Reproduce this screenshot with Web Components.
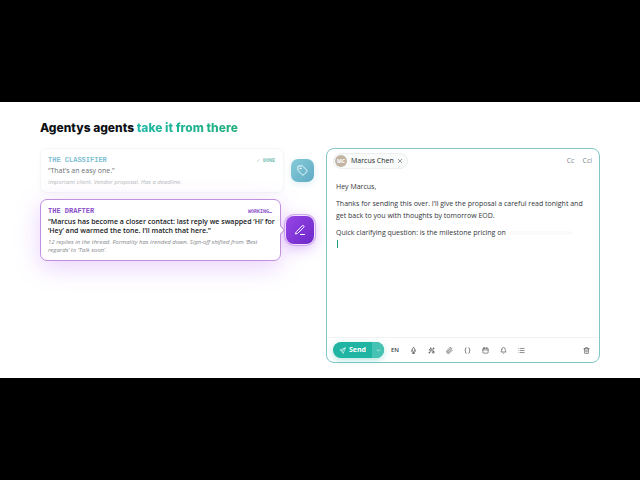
<!DOCTYPE html>
<html lang="en">
<head>
<meta charset="utf-8">
<meta name="viewport" content="width=device-width, initial-scale=1">
<title>Agentys agents</title>
<style>
  body {
    margin: 0;
    min-height: 100vh;
    display: flex;
    flex-direction: column;
    justify-content: center;
    background: #000;
    font-family: "Open Sans", "Noto Sans", sans-serif;
    font-size: 7px;
    line-height: 12px;
    color: #33363a;
  }
</style>
</head>
<body>
<agent-showcase>
  <span slot="title">Agentys agents</span>
  <span slot="accent">take it from there</span>

  <agent-step slot="agents" tone="classifier">
    <span slot="name">THE CLASSIFIER</span>
    <span slot="status">✓ DONE</span>
    <span slot="quote">“That’s an easy one.”</span>
    <span slot="note">Important client. Vendor proposal. Has a deadline.</span>
    <ui-icon slot="icon" name="tag"></ui-icon>
  </agent-step>

  <agent-step slot="agents" tone="drafter" active>
    <span slot="name">THE DRAFTER</span>
    <span slot="status">WORKING…</span>
    <span slot="quote">“Marcus has become a closer contact: last reply we swapped ‘Hi’ for ‘Hey’ and warmed the tone. I’ll match that here.”</span>
    <span slot="note">12 replies in the thread. Formality has trended down. Sign-off shifted from ‘Best regards’ to ‘Talk soon’.</span>
    <ui-icon slot="icon" name="pen"></ui-icon>
  </agent-step>

  <mail-editor slot="editor">
    <recipient-chip slot="to" initials="MC">Marcus Chen</recipient-chip>
    <mail-body></mail-body>
    <editor-toolbar slot="toolbar"></editor-toolbar>
  </mail-editor>
</agent-showcase>

<script>
const ICONS = {
  tag: '<path d="M12.6 2.6A2 2 0 0 0 11.2 2H4a2 2 0 0 0-2 2v7.2a2 2 0 0 0 .6 1.4l8.7 8.7a2.4 2.4 0 0 0 3.4 0l6.6-6.6a2.4 2.4 0 0 0 0-3.4z"/><circle cx="7.5" cy="7.5" r="1"/>',
  pen: '<path d="M13 21h8"/><path d="M16.4 3.6a2.1 2.1 0 0 1 3 3L7.4 18.6a2 2 0 0 1-.9.5L3 20l.9-3.5a2 2 0 0 1 .5-.9z"/>',
  close: '<path d="M5 5l14 14M19 5L5 19"/>',
  send: '<path d="M21 3L3 10.5l7.5 3L13.5 21z"/><path d="M21 3L10.5 13.5"/>',
  chevron: '<path d="M6 9l6 6 6-6"/>',
  mic: '<rect x="8.5" y="2" width="7" height="13" rx="3.5"/><path d="M5 10v2a7 7 0 0 0 14 0v-2M12 19v3M8 22h8"/>',
  sparkles: '<path d="M9.5 3l1.6 4.9L16 9.5l-4.9 1.6L9.5 16l-1.6-4.9L3 9.5l4.9-1.6z"/><path d="M18 13l1.2 3.3 3.3 1.2-3.3 1.2L18 22l-1.2-3.3-3.3-1.2 3.3-1.2z"/><path d="M19 3v4M17 5h4M5 17v4M3 19h4"/>',
  clip: '<path d="M21.4 11l-9.2 9.2a6 6 0 0 1-8.5-8.5l8.6-8.5a4 4 0 1 1 5.7 5.6l-8.6 8.6a2 2 0 0 1-2.8-2.9l8.5-8.4"/>',
  braces: '<path d="M8 3H7a2 2 0 0 0-2 2v5a2 2 0 0 1-2 2 2 2 0 0 1 2 2v5a2 2 0 0 0 2 2h1M16 3h1a2 2 0 0 1 2 2v5a2 2 0 0 0 2 2 2 2 0 0 0-2 2v5a2 2 0 0 1-2 2h-1"/>',
  calendar: '<rect x="3" y="4" width="18" height="17" rx="2"/><path d="M8 2v4M16 2v4M3 10h18"/>',
  bell: '<path d="M6 8a6 6 0 0 1 12 0c0 7 3 9 3 9H3s3-2 3-9"/><path d="M10.3 21a2 2 0 0 0 3.4 0"/>',
  list: '<path d="M8 5h13M8 12h13M8 19h13M3 5h.1M3 12h.1M3 19h.1"/>',
  trash: '<path d="M3 6h18M19 6v14a2 2 0 0 1-2 2H7a2 2 0 0 1-2-2V6M8 6V4a2 2 0 0 1 2-2h4a2 2 0 0 1 2 2v2M10 11v6M14 11v6"/>'
};

class UiIcon extends HTMLElement {
  connectedCallback() {
    this.attachShadow({ mode: 'open' });
    this.shadowRoot.innerHTML = `
      <style>
        :host {
          display: block;
          flex: none;
          width: var(--icon-size, 7px);
          height: var(--icon-size, 7px);
        }
        svg {
          display: block;
          width: 100%;
          height: 100%;
          fill: none;
          stroke: currentColor;
          stroke-width: var(--icon-stroke, 2);
          stroke-linecap: round;
          stroke-linejoin: round;
        }
      </style>
      <svg viewBox="0 0 24 24" aria-hidden="true">${ICONS[this.getAttribute('name')]}</svg>
    `;
  }
}

class AgentShowcase extends HTMLElement {
  connectedCallback() {
    this.attachShadow({ mode: 'open' });
    this.shadowRoot.innerHTML = `
      <style>
        :host {
          display: block;
          background: #fff;
          padding: 18px 40px 15px;
        }
        h2 {
          margin: 0 0 12px;
          font-family: Inter, sans-serif;
          font-size: 12px;
          line-height: 16px;
          font-weight: 800;
          color: #0d1114;
        }
        .accent {
          color: transparent;
          background: linear-gradient(90deg, #1db8a6, #22ad7c);
          background-clip: text;
          -webkit-background-clip: text;
        }
        .columns {
          display: grid;
          grid-template-columns: 1fr 1fr;
          gap: 12px;
        }
        .agents {
          display: flex;
          flex-direction: column;
          gap: 6px;
        }
      </style>
      <h2><slot name="title"></slot> <span class="accent"><slot name="accent"></slot></span></h2>
      <div class="columns">
        <div class="agents"><slot name="agents"></slot></div>
        <slot name="editor"></slot>
      </div>
    `;
  }
}

class AgentStep extends HTMLElement {
  connectedCallback() {
    this.attachShadow({ mode: 'open' });
    this.shadowRoot.innerHTML = `
      <style>
        :host {
          display: flex;
          align-items: center;
          gap: 7px;
          --tone: #7fc0d4;
          --status: #72c0b0;
          --quote: #6c7074;
          --note: #b5b8bb;
          --icon-size: 11px;
        }
        :host([active]) {
          gap: 5px;
          --tone: #8a4fc9;
          --status: #8a4fc9;
          --quote: #17191c;
          --note: #85888c;
          --icon-size: 12px;
        }
        .card {
          position: relative;
          flex: 1;
          min-width: 0;
          box-sizing: border-box;
          padding: 7px 4px 6px 7px;
          border: 1px solid #f5f6f7;
          border-radius: 7px;
          background: #fff;
          box-shadow: 0 1px 4px rgba(20, 30, 40, 0.03);
        }
        :host([active]) .card {
          border-color: #c08fdf;
          box-shadow: 0 6px 24px rgba(176, 90, 245, 0.28);
        }
        /* pointer towards the badge */
        :host([active]) .card::after {
          content: "";
          position: absolute;
          top: 50%;
          right: -4px;
          width: 6px;
          height: 6px;
          margin-top: -3px;
          border: solid #c08fdf;
          border-width: 1px 1px 0 0;
          background: #fff;
          transform: rotate(45deg);
          box-sizing: border-box;
        }
        .head {
          display: flex;
          justify-content: space-between;
          margin: 0 4px 2px 0;
          font-family: "Liberation Mono", monospace;
          font-size: 7px;
          line-height: 8px;
          font-weight: 700;
          color: var(--tone);
        }
        .status {
          font-family: "DejaVu Sans Mono", monospace;
          font-size: 5px;
          color: var(--status);
        }
        p {
          margin: 0;
        }
        .quote {
          line-height: 9px;
          font-weight: 500;
          color: var(--quote);
        }
        :host([active]) .quote {
          font-weight: 600;
        }
        .note {
          margin-top: 3px;
          font-size: 6px;
          line-height: 8px;
          font-style: italic;
          color: var(--note);
        }
        .badge {
          display: grid;
          place-items: center;
          width: 23px;
          height: 23px;
          border-radius: 7px;
          color: #fff;
          background: linear-gradient(135deg, #86cbd8, #5faac4);
          box-shadow: 0 2px 6px rgba(95, 170, 196, 0.2);
        }
        :host([active]) .badge {
          width: 28px;
          height: 28px;
          border-radius: 8px;
          background: linear-gradient(135deg, #9645e6, #6d28c9);
          box-shadow: 0 0 0 1px #f3e4fd, 0 0 0 2px #d0a8ef, 0 4px 14px rgba(160, 70, 240, 0.4);
        }
      </style>
      <div class="card">
        <div class="head">
          <slot name="name"></slot>
          <span class="status"><slot name="status"></slot></span>
        </div>
        <p class="quote"><slot name="quote"></slot></p>
        <p class="note"><slot name="note"></slot></p>
      </div>
      <div class="badge"><slot name="icon"></slot></div>
    `;
  }
}

class RecipientChip extends HTMLElement {
  connectedCallback() {
    this.attachShadow({ mode: 'open' });
    this.shadowRoot.innerHTML = `
      <style>
        :host {
          display: flex;
          align-items: center;
          padding: 1px;
          border: 1px solid #eceeef;
          border-radius: 8px;
          background: #f9fafa;
          font-weight: 500;
          color: #24272a;
        }
        .avatar {
          width: 12px;
          height: 12px;
          margin-right: 4px;
          border-radius: 50%;
          background: #c3b5a3;
          color: #fff;
          font-size: 5px;
          font-weight: 700;
          text-align: center;
        }
        button {
          display: grid;
          place-items: center;
          width: 12px;
          height: 12px;
          padding: 0;
          border: 0;
          background: none;
          color: #74787c;
          --icon-size: 6px;
          --icon-stroke: 3;
        }
      </style>
      <span class="avatar">${this.getAttribute('initials')}</span>
      <slot></slot>
      <button type="button" aria-label="Remove"><ui-icon name="close"></ui-icon></button>
    `;
  }
}

class MailBody extends HTMLElement {
  connectedCallback() {
    this.attachShadow({ mode: 'open' });
    this.shadowRoot.innerHTML = `
      <style>
        :host {
          display: block;
          flex: 1;
          padding: 12px 9px 10px;
        }
        .text {
          min-height: 146px;
          outline: none;
        }
        p {
          margin: 0 0 5px;
        }
        .pending {
          display: inline-block;
          width: 62px;
          height: 4px;
          margin-left: 2px;
          border-radius: 2px;
          background: #fafafa;
        }
        .caret {
          display: block;
          width: 1px;
          height: 8px;
          margin: 1px;
          background: #1b9a80;
        }
      </style>
      <div class="text" role="textbox" aria-multiline="true" aria-label="Message" contenteditable="true" spellcheck="false">
        <p>Hey Marcus,</p>
        <p>Thanks for sending this over. I’ll give the proposal a careful read tonight and get back to you with thoughts by tomorrow EOD.</p>
        <p>Quick clarifying question: is the milestone pricing on <span class="pending"></span><span class="caret"></span></p>
      </div>
    `;
  }
}

class EditorToolbar extends HTMLElement {
  connectedCallback() {
    const tools = [
      ['mic', 'Dictate'],
      ['sparkles', 'Rewrite'],
      ['clip', 'Attach file'],
      ['braces', 'Insert variable'],
      ['calendar', 'Schedule'],
      ['bell', 'Remind me'],
      ['list', 'Templates']
    ];
    this.attachShadow({ mode: 'open' });
    this.shadowRoot.innerHTML = `
      <style>
        :host {
          display: flex;
          align-items: center;
          gap: 4px;
          padding: 4px 6px;
          border-top: 1px solid #f1f3f4;
        }
        button {
          display: flex;
          align-items: center;
          justify-content: center;
          width: 14px;
          height: 14px;
          padding: 0;
          border: 0;
          background: none;
          font: inherit;
          color: #3c4044;
        }
        .send {
          display: flex;
          border-radius: 8px;
          overflow: hidden;
          background: #1fb5a2;
          box-shadow: 0 2px 6px rgba(31, 181, 162, 0.35);
        }
        .send button {
          height: 16px;
          color: #fff;
        }
        .send .main {
          gap: 3px;
          width: auto;
          padding: 0 6px;
          font-weight: 700;
        }
        .send .more {
          width: 12px;
          background: #45c2b2;
          --icon-size: 5px;
          --icon-stroke: 3;
        }
        .lang {
          font-size: 6px;
          font-weight: 600;
        }
        .trash {
          margin-left: auto;
        }
      </style>
      <div class="send">
        <button type="button" class="main"><ui-icon name="send"></ui-icon>Send</button>
        <button type="button" class="more" aria-label="Send options"><ui-icon name="chevron"></ui-icon></button>
      </div>
      <button type="button" class="lang">EN</button>
      ${tools.map(([icon, label]) => `<button type="button" aria-label="${label}"><ui-icon name="${icon}"></ui-icon></button>`).join('')}
      <button type="button" class="trash" aria-label="Discard"><ui-icon name="trash"></ui-icon></button>
    `;
  }
}

class MailEditor extends HTMLElement {
  connectedCallback() {
    this.attachShadow({ mode: 'open' });
    this.shadowRoot.innerHTML = `
      <style>
        :host {
          position: relative;
          display: flex;
          flex-direction: column;
          border: 1px solid #7fc6c6;
          border-radius: 8px;
          background: #fff;
        }
        header {
          display: flex;
          align-items: center;
          gap: 8px;
          padding: 4px 7px 0 6px;
        }
        .copy {
          padding: 0;
          border: 0;
          background: none;
          font: inherit;
          color: #85898d;
        }
        .copy:first-of-type {
          margin-left: auto;
        }
      </style>
      <header>
        <slot name="to"></slot>
        <button type="button" class="copy">Cc</button>
        <button type="button" class="copy">Cci</button>
      </header>
      <slot></slot>
      <slot name="toolbar"></slot>
    `;
  }
}

customElements.define('ui-icon', UiIcon);
customElements.define('agent-showcase', AgentShowcase);
customElements.define('agent-step', AgentStep);
customElements.define('recipient-chip', RecipientChip);
customElements.define('mail-body', MailBody);
customElements.define('editor-toolbar', EditorToolbar);
customElements.define('mail-editor', MailEditor);
</script>
</body>
</html>
